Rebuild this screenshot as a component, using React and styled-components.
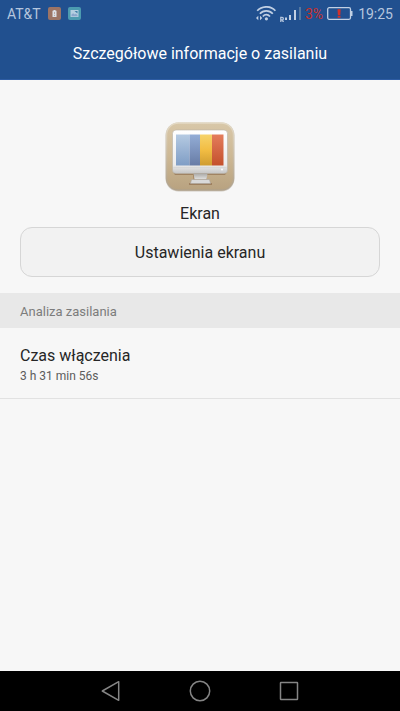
import styled, { createGlobalStyle } from "styled-components";

function App() {

    return (
        <>
            <GlobalStyle />

            <Screen>
                <StatusBar />

                <Header>
                    <h1>Szczegółowe informacje o zasilaniu</h1>
                </Header>

                <Content>
                    <AppInfo>
                        <ScreenIcon />
                        <h2>Ekran</h2>
                        <SettingsButton type="button">Ustawienia ekranu</SettingsButton>
                    </AppInfo>

                    <SectionTitle>Analiza zasilania</SectionTitle>

                    <DetailRow>
                        <dt>Czas włączenia</dt>
                        <dd>3 h 31 min 56s</dd>
                    </DetailRow>
                </Content>

                <NavigationBar />
            </Screen>
        </>
    )
}

export default App;

function StatusBar() {

    return (
        <StatusContainer>
            <StatusGroup $gap="7px">
                <span>AT&amp;T</span>

                <svg width="13" height="14" viewBox="0 0 13 14" aria-hidden="true">
                    <rect width="13" height="13" rx="2" fill="#9c7465" />
                    <path d="M4.5 3.8h1V3h2v.8h1V10h-4z" fill="#dcdfe6" />
                    <path d="M6.5 5v2.200M6.500 8v1" stroke="#b59a90" strokeWidth="0.8" />
                </svg>

                <svg width="13" height="14" viewBox="0 0 13 14" aria-hidden="true">
                    <rect width="13" height="13" rx="2" fill="#4c9bb0" />
                    <rect x="2.5" y="3" width="8" height="7" rx="0.5" fill="#b4cfe0" />
                    <path d="M3.5 9.3V7.6l1.6-1.4 1.6 1.3 1.1-.8 1.7 1.4v1.2z" fill="#8aa7cc" />
                    <path d="M6.5 4h3v2.500z" fill="#3f7fa6" />
                </svg>
            </StatusGroup>

            <StatusGroup $gap="4px">
                <svg width="20" height="16" viewBox="0 0 20 16" fill="none" aria-hidden="true">
                    <path d="M1.2 4.8C6-.5 14.8-.5 19.4 4.8" stroke="#c1d0e4" strokeWidth="1.7" />
                    <path d="M3.9 7.8C7.3 3.800 13.300 3.800 16.800 7.800" stroke="#c1d0e4" strokeWidth="1.7" />
                    <path d="M6.8 10.5C8.8 8.100 11.900 8.100 14 10.500" stroke="#c1d0e4" strokeWidth="1.7" />
                    <circle cx="10.4" cy="12.8" r="1.6" fill="#c1d0e4" />
                    <path d="M0 12l2.300-2.200v4.400zM6.300 12 4 9.800v4.400z" fill="#c1d0e4" />
                </svg>

                <svg width="21" height="16" viewBox="0 0 21 16" aria-hidden="true">
                    <path d="M.8 16v-4.600h1.300a1.200 1.200 0 0 1 0 2.500H.8M2 13.900 3.500 16" fill="none" stroke="#b5c6de" strokeWidth="1.3" />
                    <path d="M5 11.500h2V14H5zM9 9h2v5H9zM14 4h2v10h-2z" fill="#c1d0e4" />
                    <path d="M19 1h2v13h-2z" fill="#54779f" />
                </svg>

                <BatteryLevel>3%</BatteryLevel>

                <svg width="26" height="14" viewBox="0 0 26 14" aria-hidden="true">
                    <rect x="0.7" y="0.7" width="22.8" height="11.6" rx="1.5" fill="none" stroke="#c1d0e4" strokeWidth="1.3" />
                    <path d="M24 4h1.500v5H24z" fill="#c1d0e4" />
                    <path d="M10.500 2.200h3.200l-.4 5.800h-2.400zM10.700 8.700h2.800v2.100h-2.800z" fill="#d2302a" />
                </svg>

                <Clock>19:25</Clock>
            </StatusGroup>
        </StatusContainer>
    )
}

function ScreenIcon() {

    return (
        <svg width="70" height="70" viewBox="0 0 70 70" aria-hidden="true">
            <defs>
                <linearGradient id="wood" x2="0" y2="1">
                    <stop offset="0" stopColor="#d8c7a8" />
                    <stop offset="0.5" stopColor="#cdb894" />
                    <stop offset="1" stopColor="#b8a280" />
                </linearGradient>
                <linearGradient id="edge" x2="0" y2="1">
                    <stop offset="0" stopColor="#e4dac5" />
                    <stop offset="1" stopColor="#b0a18a" />
                </linearGradient>
                <linearGradient id="frame" x2="0" y2="1">
                    <stop offset="0" stopColor="#ffffff" />
                    <stop offset="0.8" stopColor="#ececec" />
                    <stop offset="1" stopColor="#c5c5c5" />
                </linearGradient>
                <linearGradient id="stand" x2="0" y2="1">
                    <stop offset="0" stopColor="#aaa9a7" />
                    <stop offset="1" stopColor="#e2e2e1" />
                </linearGradient>
                <linearGradient id="sky" x2="0" y2="1">
                    <stop offset="0" stopColor="#b5cae2" />
                    <stop offset="1" stopColor="#7f9dc5" />
                </linearGradient>
                <linearGradient id="blue" x2="0" y2="1">
                    <stop offset="0" stopColor="#93add6" />
                    <stop offset="1" stopColor="#687ca6" />
                </linearGradient>
                <linearGradient id="yellow" x2="0" y2="1">
                    <stop offset="0" stopColor="#f6d36b" />
                    <stop offset="0.5" stopColor="#f2bd43" />
                    <stop offset="1" stopColor="#cf9c31" />
                </linearGradient>
                <linearGradient id="red" x2="0" y2="1">
                    <stop offset="0" stopColor="#e47d5c" />
                    <stop offset="1" stopColor="#c4502c" />
                </linearGradient>
            </defs>

            <rect x="0.5" y="0.5" width="69" height="69" rx="13" fill="#cfcac2" />
            <rect x="1.5" y="1" width="67" height="67" rx="12" fill="url(#wood)" stroke="url(#edge)" strokeWidth="1.5" />

            <path d="M8 50h54l-2 3H42v8h5v2H24v-2h5l-1-8H10z" fill="#8b6747" opacity="0.6" />
            <rect x="7.5" y="8" width="55" height="43.5" rx="3.5" fill="url(#frame)" stroke="#b9b1a5" strokeWidth="0.6" />
            <path d="M8.5 45.5h53" stroke="#d7d7d7" />

            <path d="M11 12.5h13.500v31H11z" fill="url(#sky)" />
            <path d="M24.5 12.500H35v31H24.500z" fill="url(#blue)" />
            <path d="M35 12.500h12v31H35z" fill="url(#yellow)" />
            <path d="M47 12.500h11.500v31H47z" fill="url(#red)" />

            <path d="M28.500 51.500h14l-1 6h-12z" fill="url(#stand)" />
            <path d="M26.500 57.500h18l1 4H25.500z" fill="#d9d9d9" stroke="#a9a39b" strokeWidth="0.6" />
            <circle cx="57" cy="47.5" r="0.9" fill="#ffffff" />
        </svg>
    )
}

function NavigationBar() {

    return (
        <NavContainer>
            <NavButton type="button" aria-label="Wstecz">
                <svg width="22" height="22" viewBox="0 0 22 22">
                    <path d="M2.3 11 18.7 1.700v18.600z" />
                </svg>
            </NavButton>

            <NavButton type="button" aria-label="Ekran główny">
                <svg width="22" height="22" viewBox="0 0 22 22">
                    <circle cx="11" cy="11" r="9.7" />
                </svg>
            </NavButton>

            <NavButton type="button" aria-label="Ostatnie">
                <svg width="22" height="22" viewBox="0 0 22 22">
                    <rect x="2.5" y="2.5" width="17" height="17" rx="0.5" />
                </svg>
            </NavButton>
        </NavContainer>
    )
}

const GlobalStyle = createGlobalStyle`

    * {
        box-sizing: border-box;
        margin: 0;
        padding: 0;
    }

    body {
        font-family: Roboto, "Liberation Sans", sans-serif;
        background-color: #f7f7f7;
    }

    svg {
        display: block;
        flex-shrink: 0;
    }

    button {
        font-family: inherit;
        cursor: pointer;
    }

`

const Screen = styled.div`

    min-height: 100vh;

    display: flex;
    flex-direction: column;

    color: #262626;

`

const StatusContainer = styled.div`

    height: 28px;
    padding: 0 7px;

    display: flex;
    justify-content: space-between;
    align-items: center;

    background-color: #21508f;

    font-size: 14px;
    line-height: 28px;
    color: #b5c6de;

`

const StatusGroup = styled.div`

    display: flex;
    align-items: center;
    gap: ${props => props.$gap};

`

const BatteryLevel = styled.span`

    color: #c8302c;

`

const Clock = styled.time`

    margin-left: 1px;

`

const Header = styled.header`

    height: 52px;

    display: flex;
    justify-content: center;
    align-items: center;

    background-color: #21508f;
    border-bottom: 1px solid #2d5ca3;

    h1 {

        font-size: 16px;
        font-weight: 400;
        line-height: 20px;
        color: #fff;

    }

`

const Content = styled.main`

    flex: 1;

`

const AppInfo = styled.section`

    padding: 42px 20px 16px;

    display: flex;
    flex-direction: column;
    align-items: center;

    h2 {

        margin: 12px 0 3px;

        font-size: 16px;
        font-weight: 400;
        line-height: 20px;

    }

`

const SettingsButton = styled.button`

    width: 100%;
    padding: 15px 0 13px;

    border: 1px solid #d6d6d6;
    border-radius: 12px;

    background-color: #f2f2f2;

    font-size: 16px;
    line-height: 20px;
    color: #262626;

`

const SectionTitle = styled.h3`

    padding: 9px 20px 6px;

    background-color: #e8e8e8;

    font-size: 13px;
    font-weight: 400;
    line-height: 20px;
    color: #7c7c7c;

`

const DetailRow = styled.dl`

    padding: 18px 20px 12px;

    border-bottom: 1px solid #e2e2e2;

    dt {

        font-size: 16px;
        line-height: 20px;

    }

    dd {

        font-size: 12px;
        line-height: 20px;
        color: #5c5c5c;

    }

`

const NavContainer = styled.nav`

    height: 40px;

    display: flex;
    justify-content: center;
    align-items: center;
    gap: 67px;

    background-color: #000;

`

const NavButton = styled.button`

    border: none;

    background: none;

    svg {

        fill: none;
        stroke: #858585;
        stroke-width: 1.5;
        stroke-linejoin: round;

    }

`
